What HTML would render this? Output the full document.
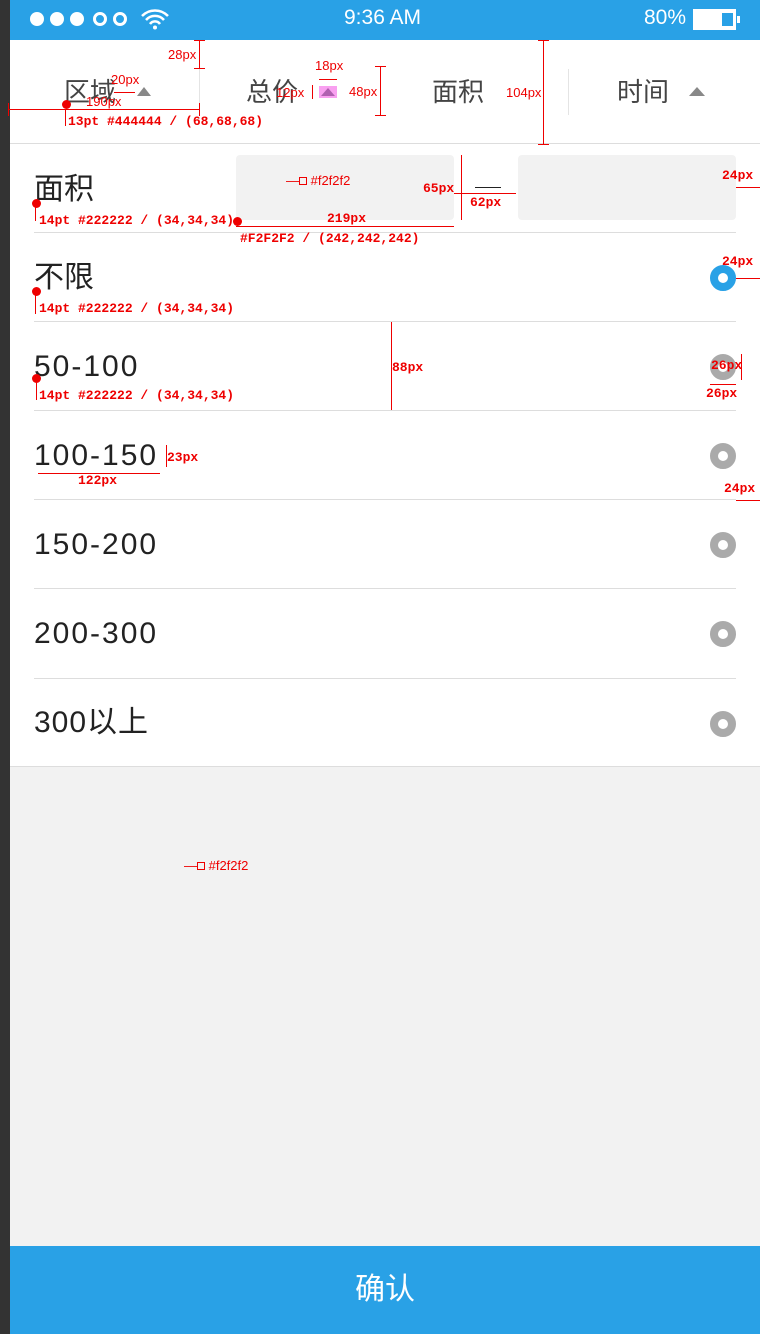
<!DOCTYPE html>
<html><head><meta charset="utf-8"><style>
*{margin:0;padding:0;box-sizing:border-box}
body{width:760px;height:1334px;position:relative;background:#f2f2f2;font-family:"Liberation Sans","Noto Sans CJK SC",sans-serif;overflow:hidden}
.a{position:absolute}
.r{color:#e00;font-family:"Liberation Mono","DejaVu Sans Mono",monospace;font-size:13px;font-weight:bold;white-space:nowrap}
.rs{color:#e00;font-size:13px;white-space:nowrap}
.tab{font-size:26px;color:#444;top:74px;line-height:36px}
.row{font-size:30px;color:#222;left:34px;line-height:36px;letter-spacing:2px}
.hl{position:absolute;left:34px;width:702px;height:1px;background:#ddd}
.rad{position:absolute;left:710px;width:26px;height:26px;border-radius:50%;border:8px solid #aaa;background:#fff}
.dot{position:absolute;width:9px;height:9px;border-radius:50%;background:#e00}
.rl{position:absolute;background:#e00}
</style></head><body>
<div class="a" style="left:0;top:0;width:10px;height:1334px;background:#333"></div>
<div class="a" style="left:10px;top:0;width:750px;height:40px;background:#29a1e6"></div>
<div class="a" style="left:30px;top:12px;width:14px;height:14px;border-radius:50%;background:#fff"></div>
<div class="a" style="left:50px;top:12px;width:14px;height:14px;border-radius:50%;background:#fff"></div>
<div class="a" style="left:70px;top:12px;width:14px;height:14px;border-radius:50%;background:#fff"></div>
<div class="a" style="left:93px;top:12px;width:14px;height:14px;border-radius:50%;border:3px solid #fff"></div>
<div class="a" style="left:113px;top:12px;width:14px;height:14px;border-radius:50%;border:3px solid #fff"></div>
<svg class="a" style="left:140px;top:8px" width="30" height="22" viewBox="0 0 30 22"><path d="M2 8a18 18 0 0 1 26 0M6 12a12 12 0 0 1 18 0M10 16a6 6 0 0 1 10 0" stroke="#fff" stroke-width="2.5" fill="none"/><circle cx="15" cy="19.5" r="2" fill="#fff"/></svg>
<div class="a" style="left:344px;top:6px;font-size:21px;color:#fff">9:36 AM</div>
<div class="a" style="left:644px;top:6px;font-size:21px;color:#fff">80%</div>
<div class="a" style="left:693px;top:9px;width:43px;height:21px;background:#fff;border:2px solid #fff"></div>
<div class="a" style="left:722px;top:13px;width:11px;height:13px;background:#29a1e6"></div>
<div class="a" style="left:737px;top:16px;width:3px;height:7px;background:#fff"></div>
<div class="a" style="left:10px;top:40px;width:750px;height:726px;background:#fff"></div>
<div class="a" style="left:10px;top:143px;width:750px;height:1px;background:#ddd"></div>
<div class="a" style="left:199px;top:69px;width:1px;height:46px;background:#e4e4e4"></div>
<div class="a" style="left:568px;top:69px;width:1px;height:46px;background:#e4e4e4"></div>
<div class="a tab" style="left:64px">区域</div>
<div class="a" style="left:137px;top:87px;border-left:7px solid transparent;border-right:7px solid transparent;border-bottom:9px solid #888"></div>
<div class="a tab" style="left:246px">总价</div>
<div class="a" style="left:319px;top:86px;width:18px;height:12px;background:#f9a0f0"></div>
<div class="a" style="left:321px;top:88px;border-left:7px solid transparent;border-right:7px solid transparent;border-bottom:8px solid #b060b0"></div>
<div class="a tab" style="left:432px">面积</div>
<div class="a tab" style="left:617px">时间</div>
<div class="a" style="left:689px;top:87px;border-left:8px solid transparent;border-right:8px solid transparent;border-bottom:9px solid #888"></div>
<div class="a" style="left:236px;top:155px;width:218px;height:65px;background:#f2f2f2;border-radius:4px"></div>
<div class="a" style="left:518px;top:155px;width:218px;height:65px;background:#f2f2f2;border-radius:4px"></div>
<div class="a" style="left:475px;top:187px;width:26px;height:1px;background:#222"></div>
<div class="a row" style="top:172px;letter-spacing:0">面积</div>
<div class="hl" style="top:232px"></div>
<div class="a row" style="top:260px;letter-spacing:0">不限</div>
<div class="hl" style="top:321px"></div>
<div class="a row" style="top:349px">50-100</div>
<div class="hl" style="top:410px"></div>
<div class="a row" style="top:438px">100-150</div>
<div class="hl" style="top:499px"></div>
<div class="a row" style="top:527px">150-200</div>
<div class="hl" style="top:588px"></div>
<div class="a row" style="top:616px">200-300</div>
<div class="hl" style="top:678px"></div>
<div class="a row" style="top:705px;letter-spacing:1px">300以上</div>
<div class="a" style="left:10px;top:766px;width:750px;height:1px;background:#ddd"></div>
<div class="rad" style="top:265px;border-color:#29a1e6"></div>
<div class="rad" style="top:354px"></div>
<div class="rad" style="top:443px"></div>
<div class="rad" style="top:532px"></div>
<div class="rad" style="top:621px"></div>
<div class="rad" style="top:711px"></div>
<div class="a" style="left:10px;top:1246px;width:750px;height:88px;background:#29a1e6;color:#fff;font-size:30px;text-align:center;line-height:88px">确认</div>
<!-- annotations -->
<div class="rl" style="left:199px;top:40px;width:1px;height:28px"></div>
<div class="rl" style="left:194px;top:40px;width:11px;height:1px"></div><div class="rl" style="left:194px;top:68px;width:11px;height:1px"></div>
<div class="a rs" style="left:168px;top:47px">28px</div>
<div class="rl" style="left:8px;top:109px;width:191px;height:1px"></div>
<div class="rl" style="left:8px;top:103px;width:1px;height:13px"></div><div class="rl" style="left:199px;top:103px;width:1px;height:13px"></div>
<div class="a rs" style="left:86px;top:94px">190px</div>
<div class="rl" style="left:114px;top:92px;width:21px;height:1px"></div>
<div class="a rs" style="left:111px;top:72px">20px</div>
<div class="dot" style="left:62px;top:100px"></div>
<div class="rl" style="left:65px;top:110px;width:1px;height:16px"></div>
<div class="a r" style="left:68px;top:114px">13pt #444444 / (68,68,68)</div>
<div class="a rs" style="left:315px;top:58px">18px</div>
<div class="rl" style="left:319px;top:79px;width:18px;height:1px"></div>
<div class="a rs" style="left:276px;top:85px">12px</div>
<div class="rl" style="left:312px;top:85px;width:1px;height:14px"></div>
<div class="rl" style="left:380px;top:66px;width:1px;height:49px"></div>
<div class="rl" style="left:375px;top:66px;width:11px;height:1px"></div><div class="rl" style="left:375px;top:115px;width:11px;height:1px"></div>
<div class="a rs" style="left:349px;top:84px">48px</div>
<div class="rl" style="left:543px;top:40px;width:1px;height:104px"></div>
<div class="rl" style="left:538px;top:40px;width:11px;height:1px"></div><div class="rl" style="left:538px;top:144px;width:11px;height:1px"></div>
<div class="a rs" style="left:506px;top:85px">104px</div>
<div class="a rs" style="left:286px;top:173px">—<span style="display:inline-block;width:8px;height:8px;border:1px solid #e00"></span> #f2f2f2</div>
<div class="rl" style="left:461px;top:155px;width:1px;height:65px"></div>
<div class="a r" style="left:423px;top:181px">65px</div>
<div class="rl" style="left:454px;top:193px;width:62px;height:1px"></div>
<div class="a r" style="left:470px;top:195px">62px</div>
<div class="rl" style="left:236px;top:226px;width:218px;height:1px"></div>
<div class="a r" style="left:327px;top:211px">219px</div>
<div class="dot" style="left:233px;top:217px"></div>
<div class="a r" style="left:240px;top:231px">#F2F2F2 / (242,242,242)</div>
<div class="a r" style="left:722px;top:168px">24px</div>
<div class="rl" style="left:736px;top:187px;width:24px;height:1px"></div>
<div class="dot" style="left:32px;top:199px"></div><div class="rl" style="left:35px;top:203px;width:1px;height:18px"></div>
<div class="a r" style="left:39px;top:213px">14pt #222222 / (34,34,34)</div>
<div class="dot" style="left:32px;top:287px"></div><div class="rl" style="left:35px;top:291px;width:1px;height:23px"></div>
<div class="a r" style="left:39px;top:301px">14pt #222222 / (34,34,34)</div>
<div class="dot" style="left:32px;top:374px"></div><div class="rl" style="left:36px;top:378px;width:1px;height:22px"></div>
<div class="a r" style="left:39px;top:388px">14pt #222222 / (34,34,34)</div>
<div class="a r" style="left:722px;top:254px">24px</div>
<div class="rl" style="left:736px;top:278px;width:24px;height:1px"></div>
<div class="rl" style="left:391px;top:322px;width:1px;height:88px"></div>
<div class="a r" style="left:392px;top:360px">88px</div>
<div class="a r" style="left:711px;top:358px">26px</div>
<div class="a r" style="left:706px;top:386px">26px</div>
<div class="rl" style="left:741px;top:354px;width:1px;height:26px"></div>
<div class="rl" style="left:710px;top:384px;width:26px;height:1px"></div>
<div class="rl" style="left:166px;top:445px;width:1px;height:22px"></div>
<div class="a r" style="left:167px;top:450px">23px</div>
<div class="rl" style="left:38px;top:473px;width:122px;height:1px"></div>
<div class="a r" style="left:78px;top:473px">122px</div>
<div class="a r" style="left:724px;top:481px">24px</div>
<div class="rl" style="left:736px;top:500px;width:24px;height:1px"></div>
<div class="a rs" style="left:184px;top:858px">—<span style="display:inline-block;width:8px;height:8px;border:1px solid #e00"></span> #f2f2f2</div>
</body></html>
